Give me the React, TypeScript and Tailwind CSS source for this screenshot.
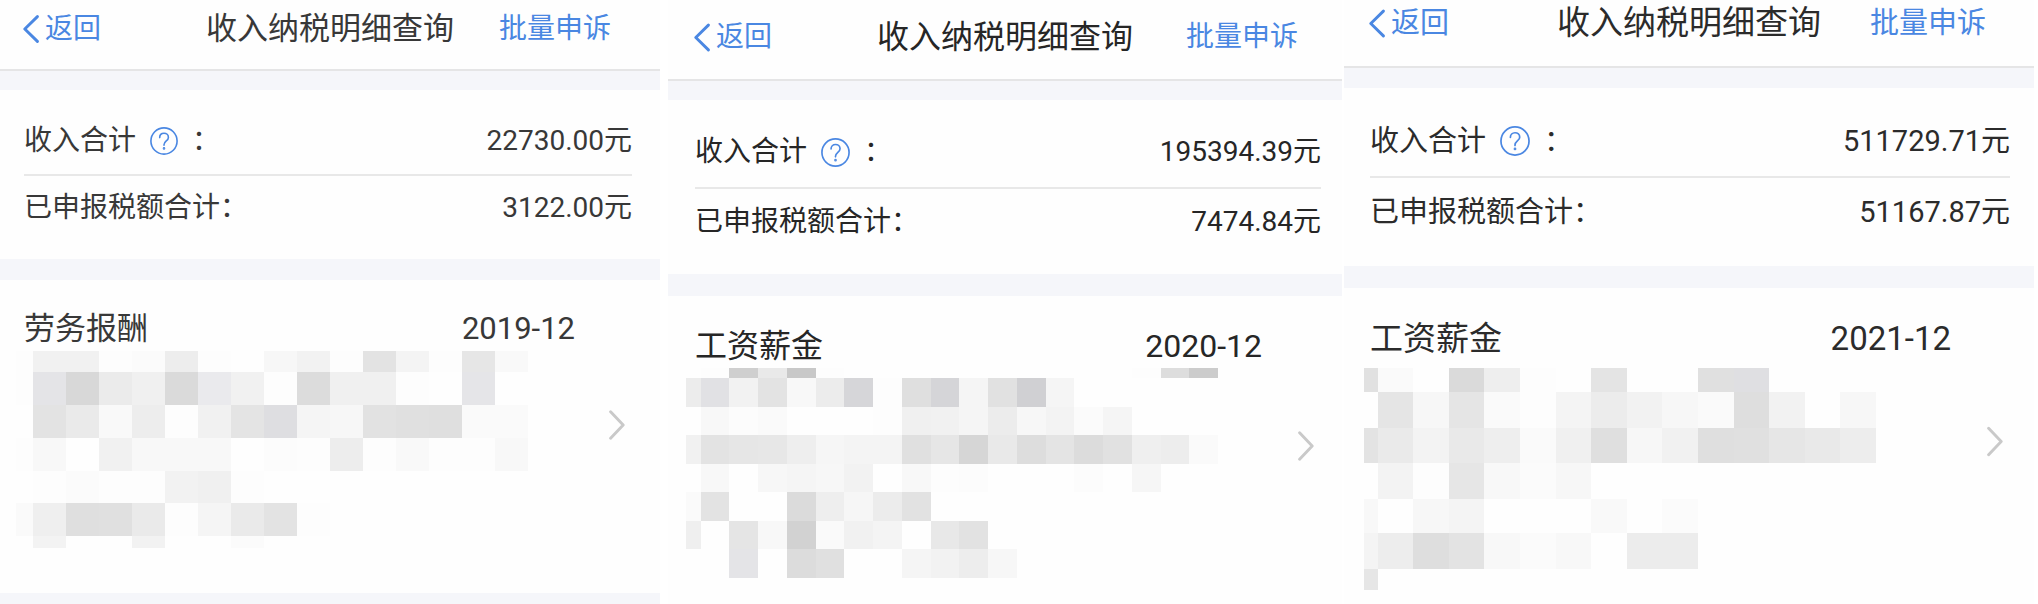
import React from "react";

type Mosaic = {
  width: number;
  height: number;
  lead: number;
  cell: number;
  rows: number[];
  fills: string[];
};

type Sheet = {
  category: string;
  period: string;
  income: string;
  tax: string;
  panel: string;
  header: string;
  backPad: string;
  actionPad: string;
  title: string;
  body: string;
  heading: string;
  icon: string;
  back: string;
  strip: string;
  divide: string;
  summary: string;
  firstRow: string;
  secondRow: string;
  item: string;
  itemHead: string;
  mosaicPad: string;
  next: string;
  mosaic: Mosaic;
  footer: boolean;
};

/* Each row lists two-digit grey levels, one per cell; ".." leaves the cell empty. */
const sheets: Sheet[] = [
  {
    category: "劳务报酬",
    period: "2019-12",
    income: "22730.00元",
    tax: "3122.00元",
    panel: "flex-[660_1_0%] text-[#383838]",
    header: "pt-[9px] pb-5",
    backPad: "pl-[23px]",
    actionPad: "pr-[49px]",
    title: "text-[31px]",
    body: "text-[28px]",
    heading: "text-[31px]",
    icon: "size-7",
    back: "h-7 w-4",
    strip: "h-[19px]",
    divide: "h-[21px]",
    summary: "pt-[31px] pb-[31px] pl-6 pr-7",
    firstRow: "pb-[13px]",
    secondRow: "pt-3",
    item: "pt-[29px] pb-[45px] pr-[35px]",
    itemHead: "pl-6 pr-[34px]",
    mosaicPad: "mt-0.5 pl-4",
    next: "mt-[101px] h-[30px] w-4",
    footer: true,
    mosaic: {
      width: 512,
      height: 197,
      lead: 17,
      cell: 33,
      rows: [21, 33, 33, 33, 32, 33, 12],
      fills: [
        "FD F1 F1 FD FB ED FD FE F7 F2 FD E3 F4 FD E6 F9",
        "FD e4 D8 EB F0 DA ea F1 FD DC F0 F0 FD FE e5 ..",
        "FE E3 EA F9 ED FD F1 E4 de F5 F7 E2 E0 DF FA FA",
        "FD F8 FE F1 F8 F8 F8 FE FC FD ED FD F9 FD FD F8",
        ".. FD FB FD FD F2 F0 FD",
        "FA EF DF E0 EA FD F5 EA E3 FD",
        ".. F3 .. .. F2 .. .. FB",
      ],
    },
  },
  {
    category: "工资薪金",
    period: "2020-12",
    income: "195394.39元",
    tax: "7474.84元",
    panel: "ml-2 flex-[674_1_0%] text-[#262626]",
    header: "pt-[17px] pb-[22px]",
    backPad: "pl-[26px]",
    actionPad: "pr-11",
    title: "text-[32px]",
    body: "text-[28px]",
    heading: "text-[32px]",
    icon: "size-[29px]",
    back: "h-[29px] w-4",
    strip: "h-[19px]",
    divide: "h-[22px]",
    summary: "pt-8 pb-8 pl-[27px] pr-[21px]",
    firstRow: "pb-[15px]",
    secondRow: "pt-[13px]",
    item: "pt-[30px] pr-7",
    itemHead: "pl-[27px] pr-9",
    mosaicPad: "mt-0.5 pl-[18px]",
    next: "mt-[105px] h-[30px] w-4",
    footer: false,
    mosaic: {
      width: 532,
      height: 210,
      lead: 14.6,
      cell: 28.75,
      rows: [10, 29, 28, 29, 28, 29, 28, 29],
      fills: [
        ".. FD CF E9 C8 FD .. .. .. .. .. .. .. .. .. .. FD DD CC",
        "EC e1 F2 E3 F8 EC d6 FD DF d5 F5 E1 d0 F5",
        "FE F8 FC FA FE FE FE FD F0 F1 F5 EC F7 F3 FB F5",
        "F1 E3 E6 E7 EE F6 F4 F4 E0 E6 D6 E9 DD E4 DC E1 EF ED FA",
        ".. F8 FE F7 F5 F7 F2 FE F8 FD FC FE FE FE FC FE F6",
        "FA E3 FE FE DB EE F6 EC E2",
        "EF FE E5 F8 D2 FA F1 F4 FE E8 E2",
        ".. .. e4 .. DC E0 FE FE F5 F2 ED F7",
      ],
    },
  },
  {
    category: "工资薪金",
    period: "2021-12",
    income: "511729.71元",
    tax: "51167.87元",
    panel: "ml-0.5 flex-[690_1_0%] text-[#2b2b2b]",
    header: "pt-[3px] pb-[23px]",
    backPad: "pl-[25px]",
    actionPad: "pr-12",
    title: "text-[33px]",
    body: "text-[29px]",
    heading: "text-[33px]",
    icon: "size-[30px]",
    back: "h-[29px] w-4",
    strip: "h-5",
    divide: "h-[22px]",
    summary: "pt-[33px] pb-[34px] pl-[26px] pr-6",
    firstRow: "pb-[15px]",
    secondRow: "pt-[14px]",
    item: "pt-[31px] pr-[31px]",
    itemHead: "pl-[26px] pr-9",
    mosaicPad: "mt-[9px] pl-5",
    next: "mt-[107px] h-[31px] w-4",
    footer: false,
    mosaic: {
      width: 512,
      height: 222,
      lead: 13.5,
      cell: 35.6,
      rows: [24, 36, 35, 36, 34, 36, 21],
      fills: [
        "E1 FA FE DA EE FD .. E4 .. .. E0 df",
        ".. E5 F7 E5 FA FD F4 EC F2 F7 FA DE F2 .. F7",
        "E3 EA F3 E9 EE FA F0 DF F7 F1 DF E0 E6 E9 ED",
        ".. F3 FD E6 F8 FB F7 FE",
        "F8 FE F7 F4 FE FE FE F9 FE FB",
        "F4 ED DE E3 F8 FB F8 FE EC EC",
        "E6",
      ],
    },
  },
];

/* Lower-case levels carry a slight cool tint. */
function shade(code: string) {
  if (code !== code.toLowerCase() || /^\d+$/.test(code)) return `#${code}${code}${code}`;
  const level = parseInt(code, 16);
  return `rgb(${level}, ${level}, ${level + 3})`;
}

function MaskedDetails({ mosaic }: { mosaic: Mosaic }) {
  const { width, height, lead, cell, rows, fills } = mosaic;
  let top = 0;
  return (
    <svg
      width={width}
      height={height}
      viewBox={`0 0 ${width} ${height}`}
      className="block"
      shapeRendering="crispEdges"
      aria-hidden="true"
    >
      {rows.map((rowHeight, r) => {
        const y = top;
        top += rowHeight;
        return fills[r].split(" ").map((code, c) =>
          code === ".." ? null : (
            <rect
              key={`${r}-${c}`}
              x={c === 0 ? 0 : lead + (c - 1) * cell}
              y={y}
              width={c === 0 ? lead : cell}
              height={rowHeight}
              fill={shade(code)}
            />
          )
        );
      })}
    </svg>
  );
}

function BackIcon({ className }: { className: string }) {
  return (
    <svg viewBox="0 0 16 28" className={className} fill="none" stroke="currentColor" strokeWidth="2.9" strokeLinecap="round" strokeLinejoin="round" aria-hidden="true">
      <path d="M14.4 1.6 1.8 14l12.6 12.4" />
    </svg>
  );
}

function NextIcon({ className }: { className: string }) {
  return (
    <svg viewBox="0 0 16 30" className={className} fill="none" stroke="#c9c9c9" strokeWidth="2.9" strokeLinecap="round" strokeLinejoin="round" aria-hidden="true">
      <path d="M1.6 1.8 14.2 15 1.6 28.2" />
    </svg>
  );
}

function HelpIcon({ className }: { className: string }) {
  return (
    <svg viewBox="0 0 28 28" className={className} fill="none" stroke="currentColor" strokeWidth="1.6" strokeLinecap="round" aria-hidden="true">
      <circle cx="14" cy="14" r="13.1" />
      <path d="M9.7 10.6c0-2.5 1.8-4.3 4.3-4.3s4.4 1.7 4.4 4.1c0 3.4-4.4 3.7-4.4 7.3v.5" />
      <circle cx="14" cy="21.4" r="0.5" fill="currentColor" />
    </svg>
  );
}

function TaxSheet({ sheet }: { sheet: Sheet }) {
  return (
    <section className={`flex min-w-0 flex-col bg-[#fefefe] ${sheet.panel}`}>
      <header className={`grid grid-cols-[1fr_auto_1fr] items-center border-b-2 border-[#e5e5e6] leading-10 ${sheet.header}`}>
        <div className={`text-[#4a87e2] ${sheet.backPad} ${sheet.body}`}>
          <button type="button" className="flex items-center gap-[6px] whitespace-nowrap leading-10">
            <BackIcon className={sheet.back} />
            返回
          </button>
        </div>
        <h1 className={`whitespace-nowrap ${sheet.title} leading-10`}>收入纳税明细查询</h1>
        <div className={`text-right text-[#4a87e2] ${sheet.actionPad} ${sheet.body}`}>
          <button type="button" className="whitespace-nowrap leading-10">批量申诉</button>
        </div>
      </header>
      <div className={`bg-[#f5f6fa] ${sheet.strip}`} />
      <dl className={`${sheet.summary} ${sheet.body}`}>
        <div className={`flex items-center justify-between border-b-2 border-[#e8e8e8] leading-10 ${sheet.firstRow}`}>
          <dt className="flex items-center whitespace-nowrap">
            收入合计
            <button type="button" aria-label="收入合计说明" className="mx-[14px] text-[#4a87e2]">
              <HelpIcon className={sheet.icon} />
            </button>
            ：
          </dt>
          <dd>{sheet.income}</dd>
        </div>
        <div className={`flex items-center justify-between leading-10 ${sheet.secondRow}`}>
          <dt className="whitespace-nowrap">已申报税额合计：</dt>
          <dd>{sheet.tax}</dd>
        </div>
      </dl>
      <div className={`bg-[#f5f6fa] ${sheet.divide}`} />
      <a href="#detail" className={`flex items-start ${sheet.item}`}>
        <div className="min-w-0 flex-1">
          <div className={`flex items-center justify-between leading-10 ${sheet.heading} ${sheet.itemHead}`}>
            <h2>{sheet.category}</h2>
            <time dateTime={sheet.period}>{sheet.period}</time>
          </div>
          <div className={sheet.mosaicPad}>
            <MaskedDetails mosaic={sheet.mosaic} />
          </div>
        </div>
        <NextIcon className={`shrink-0 ${sheet.next}`} />
      </a>
      {sheet.footer && <div className="min-h-[11px] flex-1 bg-[#f5f6fa]" />}
    </section>
  );
}

export default function App() {
  return (
    <main className="flex min-h-screen bg-white pr-1 font-['Roboto','Noto_Sans_CJK_SC',sans-serif]">
      {sheets.map((sheet) => (
        <TaxSheet key={sheet.period} sheet={sheet} />
      ))}
    </main>
  );
}
